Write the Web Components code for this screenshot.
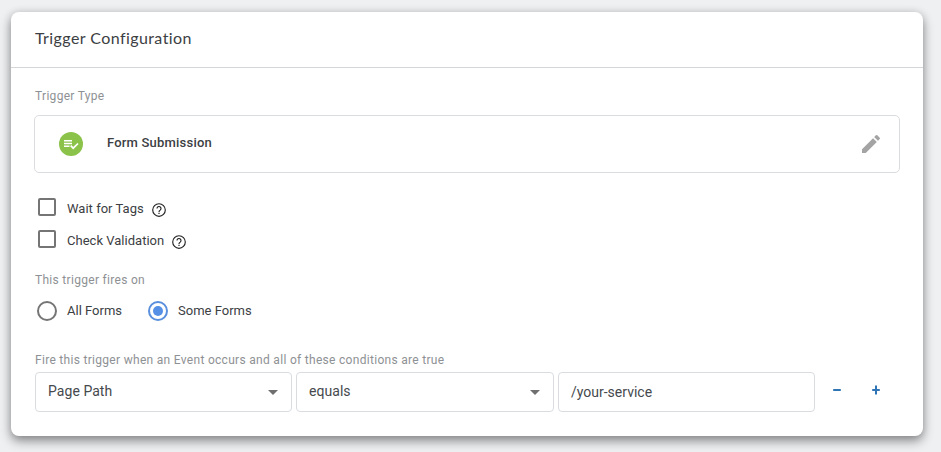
<!DOCTYPE html>
<html lang="en">
<head>
<meta charset="utf-8">
<title>Trigger Configuration</title>
<style>
body{margin:0;width:941px;height:452px;overflow:hidden;background:#eff0f2;font-family:Roboto,sans-serif;color:#3c4043}
</style>
</head>
<body>
<trigger-page></trigger-page>
<script>
const define = (name, html) => customElements.define(name, class extends HTMLElement {
  constructor() {
    super();
    const t = document.createElement('template');
    t.innerHTML = html;
    this.attachShadow({ mode: 'open' }).append(t.content.cloneNode(true));
  }
});

define('config-card', `
<style>
:host{display:flex;flex-direction:column;box-sizing:border-box;width:912px;height:424px;background:#fff;border-radius:8px;box-shadow:0 5px 11px rgba(0,0,0,.42),0 0 9px rgba(0,0,0,.1)}
header{box-sizing:border-box;height:56px;padding:0 24px;border-bottom:1px solid #d5d6d8;font:400 16px/52px Lato,sans-serif;letter-spacing:.42px;color:#3c4043}
section{display:flex;flex-direction:column;padding:0 23px}
</style>
<header><slot name="title"></slot></header><section><slot></slot></section>`);

define('field-label', `
<style>:host{display:block;padding-left:1px;height:16px;font-size:12px;line-height:16px;letter-spacing:.3px;color:#8e9194;white-space:nowrap}</style>
<slot></slot>`);

define('form-badge', `
<style>:host{display:block;width:24px;height:24px}svg{display:block}</style>
<svg width="24" height="24" viewBox="0 0 24 24"><circle cx="12" cy="12" r="12" fill="#8bc34a"/><path d="M5 8.7h8M5 11.5h8M5 14.3h5.5" stroke="#fff" stroke-width="1.4" fill="none"/><path d="M11.7 13.7l2.5 2.5 4.8-4.7" stroke="#fff" stroke-width="1.7" fill="none"/></svg>`);

define('edit-icon', `
<style>:host{display:block;width:24px;height:24px}svg{display:block}</style>
<svg width="24" height="24" viewBox="0 0 24 24" fill="#a4a4a4"><path d="M3 17.25V21h3.75L17.81 9.94l-3.75-3.75L3 17.25zM20.71 7.04a1 1 0 0 0 0-1.41l-2.34-2.34a1 1 0 0 0-1.41 0l-1.83 1.83 3.75 3.75 1.83-1.83z"/></svg>`);

define('type-row', `
<style>
:host{display:flex;align-items:center;box-sizing:border-box;width:866px;height:58px;border:1px solid #dadce0;border-radius:5px;padding:0 16px 0 24px}
.name{margin:-3px auto 0 24px;font-size:13px;font-weight:500;line-height:18px;letter-spacing:.2px;color:#3c4043}
</style>
<form-badge></form-badge><span class="name"><slot></slot></span><edit-icon></edit-icon>`);

define('help-icon', `
<style>:host{display:block;width:14px;height:14px}svg{display:block}</style>
<svg width="14" height="14" viewBox="0 0 14 14" fill="none" stroke="#222"><circle cx="7" cy="7" r="6.3" stroke-width="1.15"/><path d="M5 5.5a2 2 0 1 1 3.2 1.6C7.5 7.6 7 8 7 8.9" stroke-width="1.15"/><path d="M7 9.8v1.2" stroke-width="1.2"/></svg>`);

define('check-option', `
<style>
:host{display:flex;align-items:flex-start;height:32px;padding-left:4px}
i{box-sizing:border-box;width:18px;height:18px;border:2px solid #757575;border-radius:2px}
span{margin:3px 8px 0 11px;font-size:13px;line-height:16px;letter-spacing:.02px}
help-icon{margin-top:5px}
</style>
<i></i><span><slot></slot></span><help-icon></help-icon>`);

define('radio-option', `
<style>
:host{display:flex;align-items:center;height:20px}
i{box-sizing:border-box;display:flex;align-items:center;justify-content:center;width:20px;height:20px;border:2px solid #757575;border-radius:50%}
:host([checked]) i{border-color:#5a8fdd}
:host([checked]) i::after{content:"";width:10px;height:10px;border-radius:50%;background:#5590e6}
span{margin-left:10px;font-size:13px;line-height:18px;letter-spacing:0}
</style>
<i></i><span><slot></slot></span>`);

define('text-box', `
<style>
:host{display:flex;align-items:center;box-sizing:border-box;width:257px;height:40px;border:1px solid #dadce0;border-radius:4px;padding:0 12px;font-size:14px;line-height:20px;color:#45494d}
span{letter-spacing:0}
</style>
<span><slot></slot></span>`);

define('select-box', `
<style>
:host{display:flex;align-items:center;justify-content:space-between;box-sizing:border-box;width:257px;height:40px;border:1px solid #dadce0;border-radius:4px;padding:0 13px 0 12px;font-size:14px;line-height:20px;color:#45494d}
span{margin-top:-2px;letter-spacing:.05px}
svg{display:block;margin-top:1px}
</style>
<span><slot></slot></span><svg width="10" height="5"><path d="M0 0h10L5 5z" fill="#6f6f6f"/></svg>`);

define('row-button', `
<style>:host{display:block;width:10px;height:10px}svg{display:block}.v{display:none}:host([add]) .v{display:block}</style>
<svg width="10" height="10" viewBox="0 0 10 10" stroke="#2f74b5" stroke-width="2"><path d="M1.2 5h7.6"/><path class="v" d="M5 .5v9"/></svg>`);

define('trigger-page', `
<style>
:host{display:block;padding:12px 0 0 11px}
.type{margin-top:20px}
type-row{margin-top:11px}
.checks{margin-top:25px}
.fires{margin-top:10px}
.radios{display:flex;gap:26px;margin:13px 0 0 3px}
.cond{margin-top:31px}
.row{display:flex;align-items:center;margin:4px 0 0 1px;gap:4px}
.op{width:258px}
.minus{margin:-4px 0 0 13px}
.plus{margin:-4px 0 0 25px}
</style>
<config-card>
<span slot="title">Trigger Configuration</span>
<field-label class="type">Trigger Type</field-label>
<type-row>Form Submission</type-row>
<div class="checks"><check-option>Wait for Tags</check-option><check-option>Check Validation</check-option></div>
<field-label class="fires">This trigger fires on</field-label>
<div class="radios"><radio-option>All Forms</radio-option><radio-option checked>Some Forms</radio-option></div>
<field-label class="cond">Fire this trigger when an Event occurs and all of these conditions are true</field-label>
<div class="row"><select-box>Page Path</select-box><select-box class="op">equals</select-box><text-box>/your-service</text-box><row-button class="minus"></row-button><row-button class="plus" add></row-button></div>
</config-card>`);
</script>
</body>
</html>
